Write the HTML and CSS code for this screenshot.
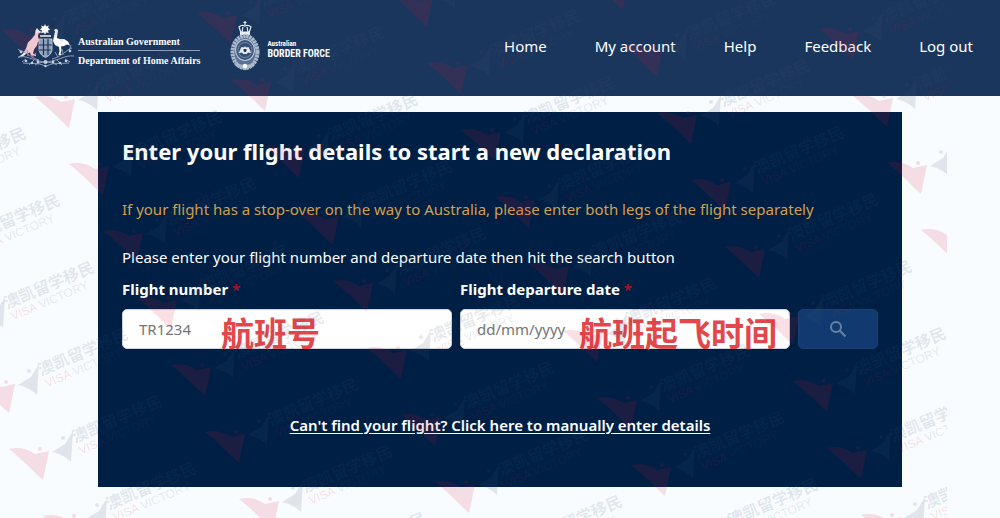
FILE: index.html
```html
<!DOCTYPE html>
<html lang="en">
<head>
    <meta charset="UTF-8">
    <meta name="viewport" content="width=device-width, initial-scale=1.0">
    <title>Enter your flight details</title>
    <link rel="stylesheet" href="styles.css">
</head>
<body>

    <header class="header">
        <div class="logos">
            <a class="logo" href="#">
                <svg class="crest" viewBox="0 0 58 44" width="58" height="44" aria-hidden="true">
                    <!-- star -->
                    <path fill="#fff" d="M28 0l1.2 2.4 2.6-.8-.8 2.5 2.3 1.2-2.3 1.3.8 2.6-2.6-.8L28 10.800l-1.200-2.400-2.600.8.8-2.600-2.300-1.300L25 4.100l-.8-2.500 2.600.8z"/>
                    <!-- kangaroo -->
                    <path fill="#f4e3ea" d="M20 4l2 2.500 2 1-.5 1.500-2 .5-.5 3 1 3 3 2-1 1-3-1-1 4-3 4-1 4 3 1v1.500l-5-.5-1-3-4 1.500-4 3-4 .5 5-4 3-5 2-6 4-4 3-4 .5-4z"/>
                    <!-- emu -->
                    <path fill="#fff" d="M37 6l2-1.200L41 6l-.5 4-.5 4 3 1 4 0 4 2.500 2 4-3-1-3 1.500-3 .5.5 4-1 3 2 1.500h-4l1-4-.5-4-4-2-2-4 1-5 1-4.500z"/>
                    <!-- shield -->
                    <path fill="#8fa1ba" stroke="#c9d3e0" stroke-width=".8" d="M22 15h13v10c0 4-3 7-6.500 8.500C25 32 22 29 22 25z"/>
                    <path stroke="#1b365d" stroke-width="1.200" fill="none" d="M26.500 15v16M31 15v16M22 21h13M22 26h12"/>
                    <path stroke="#fff" fill="none" stroke-width="1.400" d="M23 12h11"/>
                    <!-- wattle branches and scroll -->
                    <g fill="none" stroke="#8c9db8" stroke-width="1">
                        <path d="M2 26c6 1 12 8 20 10M1 33c8-2 14 3 26 5M6 39c8 1 14-1 22 3M5 29l-4-4M11 32l-1-6M15 34l4-5M9 35l-4 3M17 36l-5 5"/>
                        <path d="M55 24c-6 2-11 9-20 11M57 32c-9-1-14 4-27 6M52 39c-9 1-16-1-22 3M52 27l2-6M46 31l-1-6M41 33l-3-5M48 35l5 3M40 36l5 5"/>
                        <path d="M18 41c6-4 15-4 22 0"/>
                    </g>
                    <g fill="#c3cddb">
                        <circle cx="4" cy="28" r="1.300"/><circle cx="9" cy="37" r="1.300"/><circle cx="15" cy="39" r="1.300"/><circle cx="21" cy="38" r="1.400"/>
                        <circle cx="53" cy="27" r="1.300"/><circle cx="49" cy="37" r="1.300"/><circle cx="43" cy="39" r="1.300"/><circle cx="36" cy="38" r="1.400"/>
                        <circle cx="28.500" cy="38" r="2"/><circle cx="28.500" cy="42" r="1.300"/>
                    </g>
                </svg>
                <span class="gov-text">
                    <span class="gov-line">Australian Government</span>
                    <span class="gov-line">Department of Home Affairs</span>
                </span>
            </a>
            <a class="logo" href="#">
                <svg class="badge" viewBox="0 0 30 50" width="30" height="50" aria-hidden="true">
                    <!-- crown -->
                    <g fill="none" stroke="#e9eef5" stroke-width="1.200">
                        <path d="M15 0v4M13.500 1.500h3"/>
                        <path d="M11 12L9 6c2-2 4-2 6-1 2-1 4-1 6 1l-2 6zM12 11l1-5M18 11l-1-5"/>
                    </g>
                    <path fill="#e9eef5" d="M10 10.500h10V14H10z"/>
                    <!-- wreath and disc -->
                    <ellipse cx="15" cy="31" rx="12.500" ry="16" fill="#5b7294" stroke="#aab8cb" stroke-width="4" stroke-dasharray="2.500 .6"/>
                    <ellipse cx="15" cy="29" rx="9.500" ry="10.500" fill="#3c567c" stroke="#b9c5d5" stroke-width="1.200"/>
                    <ellipse cx="15" cy="29" rx="7" ry="7.500" fill="#334f77" stroke="#8295b1" stroke-width=".8"/>
                    <path fill="#e9eef5" d="M15 25l1 1.500 2.500-.5 1.500 3 1 3-3-.5-1.500 1.500h-3L12 31.500l-3 .5 1-3 1.500-3L14 26.500z"/>
                    <path fill="#1b365d" d="M13.500 28h3v2L15 31.500 13.500 30z"/>
                    <path fill="#aab8cb" d="M5 41c6 4 14 4 20 0l-1 4c-4 2-6 2-9 4.500C12 47 10 47 6 45z"/>
                    <circle cx="15" cy="45" r="2.200" fill="#fff"/>
                </svg>
                <span class="abf-text">
                    <span class="abf-small">Australian</span>
                    <span class="abf-large">BORDER FORCE</span>
                </span>
            </a>
        </div>
        <nav class="nav">
            <a href="#">Home</a>
            <a href="#">My account</a>
            <a href="#">Help</a>
            <a href="#">Feedback</a>
            <a href="#">Log out</a>
        </nav>
    </header>

    <main class="panel">
        <h1>Enter your flight details to start a new declaration</h1>
        <p class="notice">If your flight has a stop-over on the way to Australia, please enter both legs of the flight separately</p>
        <p class="hint">Please enter your flight number and departure date then hit the search button</p>

        <form class="search-form">
            <div class="field">
                <label for="flight">Flight number <span class="required">*</span></label>
                <div class="control">
                    <input type="text" id="flight" placeholder="TR1234">
                    <span class="note note-flight" lang="zh">航班号</span>
                </div>
            </div>
            <div class="field">
                <label for="date">Flight departure date <span class="required">*</span></label>
                <div class="control">
                    <input type="text" id="date" placeholder="dd/mm/yyyy">
                    <span class="note note-date" lang="zh">航班起飞时间</span>
                </div>
            </div>
            <button type="button" class="search-btn" aria-label="Search">
                <svg viewBox="0 0 18 18" width="18" height="18" fill="none" stroke="#6681a6" stroke-width="2" aria-hidden="true">
                    <circle cx="7" cy="7" r="5"/>
                    <path d="M10.800 10.800L16.500 16.500"/>
                </svg>
            </button>
        </form>

        <a class="manual" href="#">Can't find your flight? Click here to manually enter details</a>
    </main>

    <svg class="watermark" aria-hidden="true">
        <defs>
            <g id="mark">
                <path class="wm-red" d="M0 0C8-2 18-1 26 5l14-3-6 29C24 22 12 9 0 0z"/>
                <path class="wm-grey" d="M43 3l13-8 8-13-2 31c-4-4-10-8-19-10z"/>
                <circle class="wm-red" cx="31" cy="0" r="2"/>
                <circle class="wm-grey" cx="54" cy="-11" r="2"/>
                <g transform="translate(66 -6) rotate(-23)">
                    <text class="wm-grey wm-cn" lang="zh">澳凯留学移民</text>
                    <text class="wm-grey wm-en" x="1" y="13"><tspan class="wm-red">VISA</tspan> VICTORY</text>
                </g>
            </g>
        </defs>
    </svg>

    <script>
        // repeat the mark on a slanted grid
        const watermark = document.querySelector('.watermark');
        for (let col = -3; col < 5; col++) {
            for (let row = -5; row < 8; row++) {
                const x = 299 + col * 196 + row * 34;
                const y = 214 - col * 17 + row * 67;
                const use = document.createElementNS('http://www.w3.org/2000/svg', 'use');
                use.setAttribute('href', '#mark');
                use.setAttribute('transform', `translate(${x} ${y})`);
                watermark.appendChild(use);
            }
        }
    </script>

</body>
</html>
```
FILE: styles.css
```css
* {
    box-sizing: border-box;
    margin: 0;
    padding: 0;
}

body {
    position: relative;
    min-height: 100vh;
    overflow-x: hidden;
    font-family: "Noto Sans", "Open Sans", "Noto Sans CJK SC", sans-serif;
    font-size: 15px;
    line-height: 24px;
    color: white;
    background-color: #f8fcff;
}

.header {
    display: flex;
    justify-content: space-between;
    align-items: center;
    min-height: 96px;
    padding: 0 27px 4px 17px;
    background-color: #1b365d;
}

.logos {
    display: flex;
    align-items: center;
    gap: 30px;
}

.logo {
    display: flex;
    align-items: center;
    gap: 3px;
    color: white;
    text-decoration: none;
}

.gov-text {
    display: flex;
    flex-direction: column;
    padding-top: 10px;
    font-family: "Liberation Serif", serif;
    font-size: 10px;
    font-weight: bold;
    line-height: 16px;
}

.gov-line + .gov-line {
    border-top: 1px solid #8fa1ba;
    padding-top: 2px;
}

.abf-text {
    display: flex;
    flex-direction: column;
    padding: 8px 0 0 4px;
    font-family: "Roboto Condensed", Roboto, sans-serif;
    font-weight: bold;
}

.abf-small {
    font-size: 7px;
    line-height: 8px;
}

.abf-large {
    font-size: 10px;
    line-height: 12px;
}

.nav {
    display: flex;
    gap: 48px;
}

.nav a {
    color: white;
    text-decoration: none;
}

.panel {
    display: flex;
    flex-direction: column;
    max-width: 804px;
    margin: 16px auto 0;
    padding: 23px 24px 50px;
    background-color: #001f45;
}

h1 {
    font-size: 22px;
    line-height: 32px;
}

.notice {
    margin-top: 30px;
    color: #d3a04c;
}

.hint {
    margin-top: 24px;
}

.search-form {
    display: grid;
    grid-template-columns: 1fr 1fr 80px;
    gap: 8px;
    align-items: end;
    margin-top: 8px;
}

.field label {
    display: block;
    margin-bottom: 8px;
    font-weight: bold;
}

.required {
    color: #a5102a;
}

.control {
    position: relative;
}

.control input {
    display: block;
    width: 100%;
    height: 40px;
    padding: 0 16px;
    border: 1px solid #ccd3dc;
    border-radius: 5px;
    font: inherit;
    color: #333;
    background-color: white;
}

.control input::placeholder {
    color: #757575;
}

.note {
    position: absolute;
    top: 0;
    font-family: "Noto Sans CJK SC", sans-serif;
    font-size: 33px;
    font-weight: bold;
    line-height: 46px;
    color: #e2474c;
    white-space: nowrap;
    pointer-events: none;
}

.note-flight {
    left: 99px;
}

.note-date {
    left: 119px;
}

.search-btn {
    display: flex;
    justify-content: center;
    align-items: center;
    height: 40px;
    border: 1px solid #1d4070;
    border-radius: 5px;
    background-color: #113b70;
    cursor: pointer;
}

.manual {
    align-self: center;
    margin-top: 64px;
    font-weight: 600;
    color: white;
    text-underline-offset: 2px;
}

.watermark {
    position: absolute;
    top: 0;
    left: 0;
    width: 947px;
    max-width: 100%;
    height: 100%;
    overflow: hidden;
    pointer-events: none;
}

.wm-red {
    fill: rgba(215, 15, 50, 0.13);
}

.wm-grey {
    fill: rgba(60, 80, 110, 0.13);
}

.wm-cn {
    font-family: "Noto Sans CJK SC", sans-serif;
    font-size: 16px;
    font-weight: bold;
}

.wm-en {
    font-family: "Liberation Sans", sans-serif;
    font-size: 12px;
}
```
